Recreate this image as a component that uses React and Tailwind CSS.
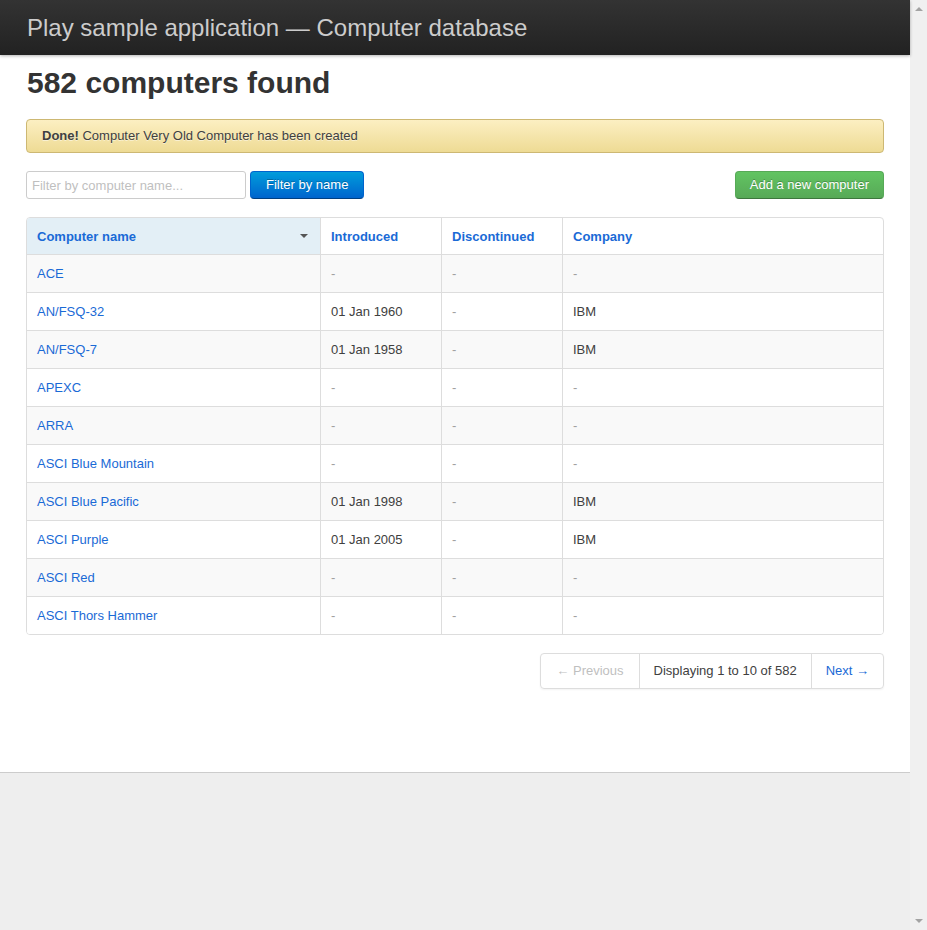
import React from "react";

const rows = [
  ["ACE", "-", "-", "-"],
  ["AN/FSQ-32", "01 Jan 1960", "-", "IBM"],
  ["AN/FSQ-7", "01 Jan 1958", "-", "IBM"],
  ["APEXC", "-", "-", "-"],
  ["ARRA", "-", "-", "-"],
  ["ASCI Blue Mountain", "-", "-", "-"],
  ["ASCI Blue Pacific", "01 Jan 1998", "-", "IBM"],
  ["ASCI Purple", "01 Jan 2005", "-", "IBM"],
  ["ASCI Red", "-", "-", "-"],
  ["ASCI Thors Hammer", "-", "-", "-"],
];

function Cell({ value, first, idx }) {
  const isDash = value === "-";
  return (
    <td
      className={`${first ? "" : "border-l"} border-t border-[#dddddd] pt-[10px] pb-[9px] px-[10px] leading-[18px] align-top ${
        idx % 2 === 0 ? "bg-[#f9f9f9]" : "bg-white"
      }`}
    >
      {first ? (
        <a className="text-[#1a6ad6]">{value}</a>
      ) : isDash ? (
        <em className="not-italic text-[#a0a0a0]">-</em>
      ) : (
        <span className="text-[#404040]">{value}</span>
      )}
    </td>
  );
}

export default function App() {
  return (
    <div
      className="flex h-[930px] w-full overflow-hidden text-[13px]"
      style={{ fontFamily: '"Liberation Sans", Arial, sans-serif' }}
    >
      <div className="flex flex-1 flex-col bg-[#eeeeee]">
        <header className="relative z-10 h-[55px] bg-gradient-to-b from-[#333333] to-[#222222] pl-[27px] pt-[10px] shadow-[0_1px_3px_rgba(0,0,0,0.3)]">
          <div className="text-[24px] leading-[36px] text-[#cccccc]">
            Play sample application — Computer database
          </div>
        </header>
        <section className="h-[718px] border-b border-[#cccccc] bg-white px-[26px] pt-[10px]">
          <h1 className="pl-px text-[30px] font-bold leading-[36px] text-[#333333]">
            582 computers found
          </h1>
          <div className="mt-[18px] rounded-[4px] border border-[#cdb873] bg-gradient-to-b from-[#fcefc2] to-[#eedb94] px-[15px] py-[7px] leading-[18px] text-[#404040] [text-shadow:0_1px_0_rgba(255,255,255,0.5)]">
            <strong className="font-bold">Done!</strong> Computer Very Old Computer has been created
          </div>
          <div className="mt-[18px] flex items-center">
            <input
              type="text"
              placeholder="Filter by computer name..."
              className="h-[28px] w-[220px] rounded-[3px] border border-[#cccccc] px-[5px] text-[13px] text-[#808080] outline-none placeholder:text-[#bfbfbf]"
            />
            <button className="ml-[4px] h-[28px] rounded-[4px] border border-[#0064cd] border-b-[#003f81] bg-gradient-to-b from-[#049cdb] to-[#0064cd] px-[15px] text-[13px] text-white [text-shadow:0_-1px_0_rgba(0,0,0,0.25)]">
              Filter by name
            </button>
            <div className="flex-1" />
            <button className="h-[28px] rounded-[4px] border border-[#57a957] border-b-[#3d773d] bg-gradient-to-b from-[#62c462] to-[#57a957] px-[14px] text-[13px] text-white [text-shadow:0_-1px_0_rgba(0,0,0,0.25)]">
              Add a new computer
            </button>
          </div>
          <div className="mt-[18px] overflow-hidden rounded-[4px] border border-[#dddddd]">
            <table className="w-full table-fixed border-separate border-spacing-0">
              <thead>
                <tr>
                  <th className="relative w-[293px] bg-[#e3eff6] pt-[10px] pb-[8px] px-[10px] text-left font-bold leading-[18px] text-[#1a6ad6]">
                    Computer name
                    <span className="absolute right-[12px] top-[16px] h-0 w-0 border-x-[4px] border-t-[4px] border-x-transparent border-t-[#555555]" />
                  </th>
                  <th className="w-[121px] border-l border-[#dddddd] pt-[10px] pb-[8px] px-[10px] text-left font-bold leading-[18px] text-[#1a6ad6]">
                    Introduced
                  </th>
                  <th className="w-[121px] border-l border-[#dddddd] pt-[10px] pb-[8px] px-[10px] text-left font-bold leading-[18px] text-[#1a6ad6]">
                    Discontinued
                  </th>
                  <th className="border-l border-[#dddddd] pt-[10px] pb-[8px] px-[10px] text-left font-bold leading-[18px] text-[#1a6ad6]">
                    Company
                  </th>
                </tr>
              </thead>
              <tbody>
                {rows.map((r, i) => (
                  <tr key={r[0]}>
                    {r.map((v, j) => (
                      <Cell key={j} value={v} first={j === 0} idx={i} />
                    ))}
                  </tr>
                ))}
              </tbody>
            </table>
          </div>
          <div className="mt-[18px] flex justify-end">
            <ul className="flex rounded-[4px] border border-[#dddddd] leading-[34px] shadow-[0_1px_2px_rgba(0,0,0,0.05)]">
              <li className="pl-[15px] pr-[15px] text-[#bfbfbf]">← Previous</li>
              <li className="border-l border-[#dddddd] px-[14px] text-[#404040]">
                Displaying 1 to 10 of 582
              </li>
              <li className="border-l border-[#dddddd] px-[14px] text-[#1a6ad6]">Next →</li>
            </ul>
          </div>
        </section>
        <div className="flex-1" />
      </div>
      <div className="flex w-[17px] flex-col items-center justify-between bg-[#f0f0f0] py-[7px]">
        <span className="h-0 w-0 border-x-[4px] border-b-[4px] border-x-transparent border-b-[#a3a3a3]" />
        <span className="h-0 w-0 border-x-[4px] border-t-[4px] border-x-transparent border-t-[#a3a3a3]" />
      </div>
    </div>
  );
}
